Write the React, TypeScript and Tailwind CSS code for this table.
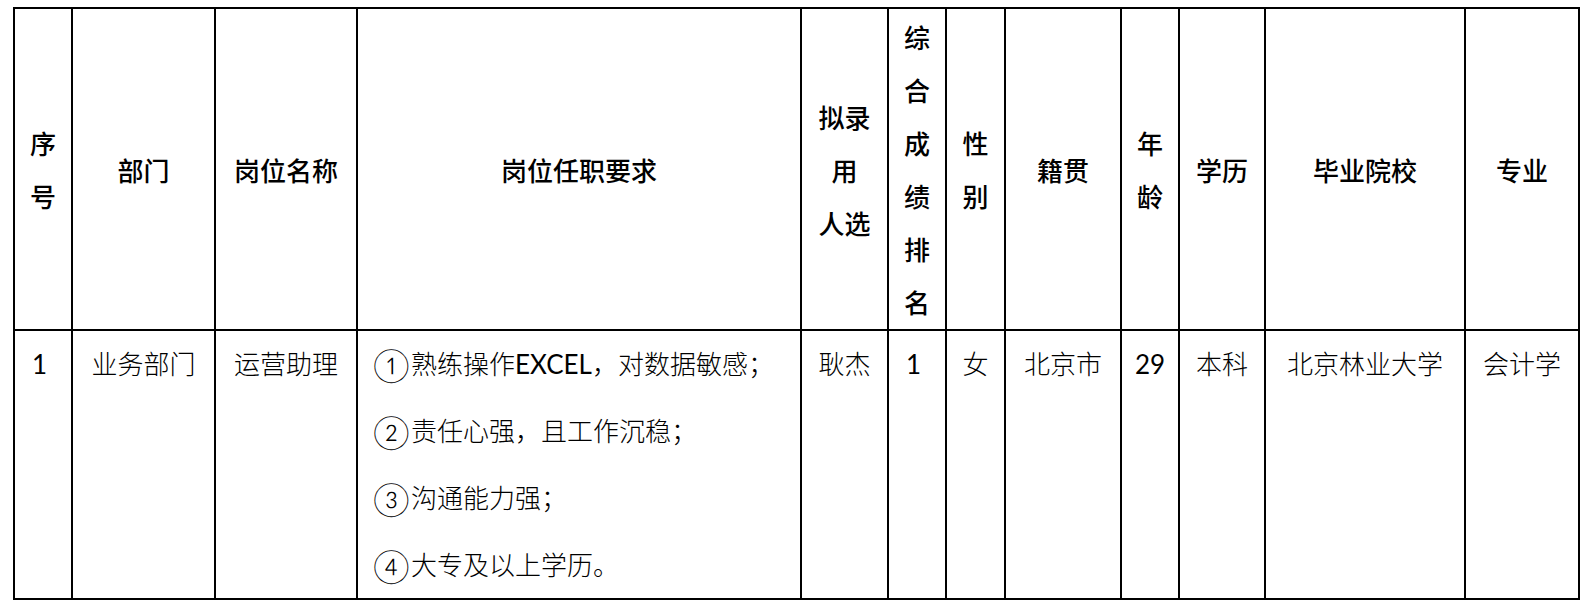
const cols = "grid-cols-[58px_143px_142px_444px_87px_58px_59px_116px_58px_86px_200px_114px]";

const headers: string[][] = [
  ["序", "号"],
  ["部门"],
  ["岗位名称"],
  ["岗位任职要求"],
  ["拟录", "用", "人选"],
  ["综", "合", "成", "绩", "排", "名"],
  ["性", "别"],
  ["籍贯"],
  ["年", "龄"],
  ["学历"],
  ["毕业院校"],
  ["专业"],
];

const requirements: [string, React.ReactNode][] = [
  ["①", <>熟练操作<span className="font-normal">EXCEL</span>，对数据敏感；</>],
  ["②", "责任心强，且工作沉稳；"],
  ["③", "沟通能力强；"],
  ["④", "大专及以上学历。"],
];

type Cell = { text: string; align: "left" | "center"; latin?: boolean };

const row: Cell[] = [
  { text: "1", align: "left", latin: true },
  { text: "业务部门", align: "center" },
  { text: "运营助理", align: "center" },
  { text: "", align: "left" },
  { text: "耿杰", align: "center" },
  { text: "1", align: "left", latin: true },
  { text: "女", align: "center" },
  { text: "北京市", align: "center" },
  { text: "29", align: "left", latin: true },
  { text: "本科", align: "center" },
  { text: "北京林业大学", align: "center" },
  { text: "会计学", align: "center" },
];

export default function App() {
  return (
    <div className="w-[1592px] h-[611px] bg-white pl-[13px] pt-[7px]">
      <div
        className={`grid ${cols} grid-rows-[322px_269px] w-[1567px] border-l-2 border-t-2 border-black text-black`}
      >
        {headers.map((lines, i) => (
          <div
            key={i}
            className="flex flex-col items-center justify-center border-r-2 border-b-2 border-black font-['Noto_Sans_CJK_SC',serif] font-medium text-[26px] leading-[53px]"
          >
            {lines.map((l, j) => (
              <span key={j} className="whitespace-nowrap">
                {l}
              </span>
            ))}
          </div>
        ))}

        {row.map((c, i) => (
          <div
            key={i}
            className={`border-r-2 border-b-2 border-black font-['Lato','Noto_Sans_CJK_SC',sans-serif] text-[26px] leading-[67px] whitespace-nowrap ${
              c.latin ? "font-normal" : "font-light"
            } ${c.align === "center" ? "text-center" : i === 8 ? "pl-[13px]" : "pl-[17px]"}`}
          >
            {i === 3
              ? requirements.map(([n, r], j) => (
                  <div key={j} className="flex items-center">
                    <span className="text-[34px] leading-none font-light mr-[1px] -ml-[2px]">{n}</span>
                    <span>{r}</span>
                  </div>
                ))
              : c.text}
          </div>
        ))}
      </div>
    </div>
  );
}
